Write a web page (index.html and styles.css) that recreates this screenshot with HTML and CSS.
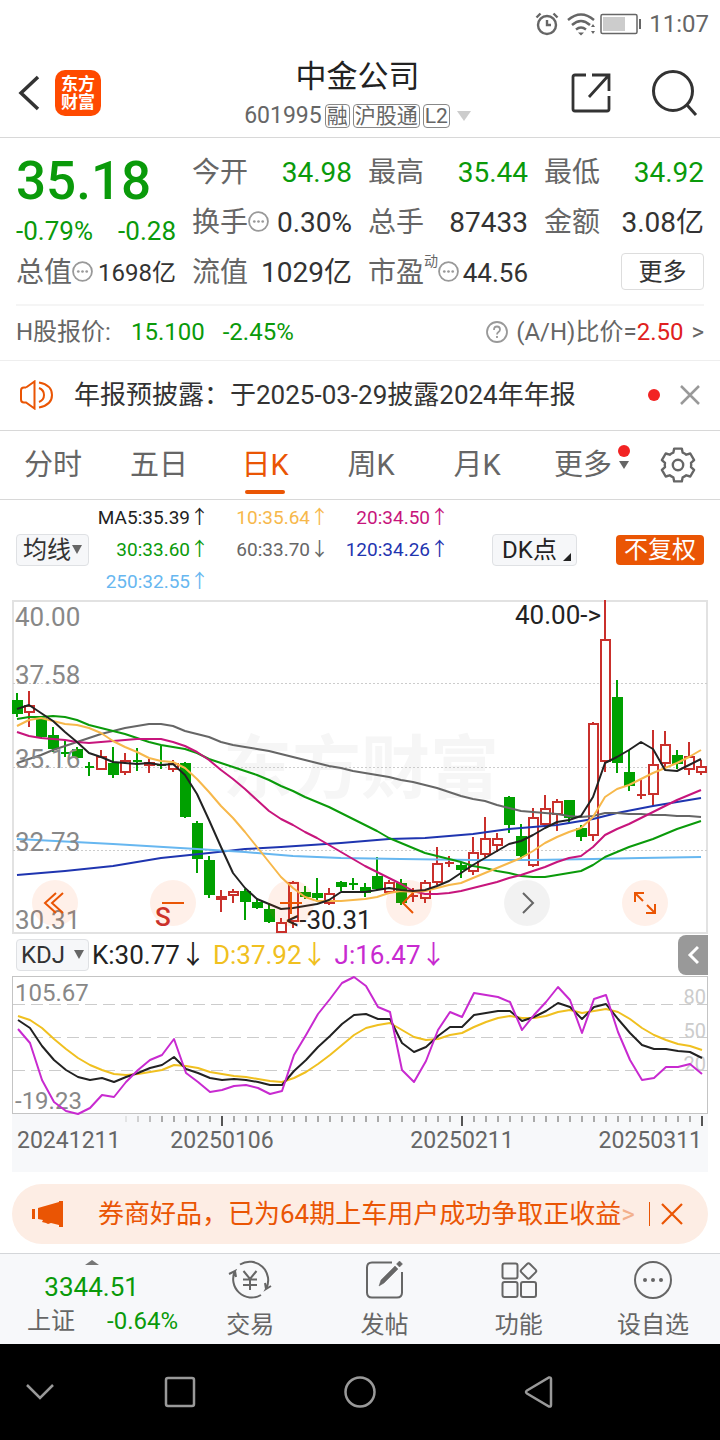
FILE: index.html
```html
<!DOCTYPE html>
<html lang="zh-CN">

<head>
    <meta charset="UTF-8">
    <meta name="viewport" content="width=device-width, initial-scale=1.0">
    <title>中金公司 601995</title>
    <link rel="stylesheet" href="styles.css">
</head>

<body>

    <!-- shared icons -->
    <svg class="defs" width="0" height="0" aria-hidden="true">
        <symbol id="dots" viewBox="0 0 20 20">
            <circle cx="10" cy="10" r="9" fill="none" stroke="#999" stroke-width="1.7" />
            <g fill="#999"><circle cx="6" cy="10" r="1.3" /><circle cx="10" cy="10" r="1.3" /><circle cx="14" cy="10" r="1.3" /></g>
        </symbol>
    </svg>

    <div class="status-bar">
        <svg class="status-alarm" width="24" height="24" viewBox="0 0 24 24" fill="none" stroke="#666" stroke-width="2.400">
            <circle cx="12" cy="13" r="9" />
            <path d="M12 8v5h4M1.500 5.500l4-4M22.500 5.500l-4-4" />
        </svg>
        <svg width="32" height="24" viewBox="0 0 32 24" fill="none" stroke="#666" stroke-width="2.400">
            <path d="M1 8Q14 -3 27 8M5 13Q14 5 23 13M9 17.500Q14 13.500 19 17.500" />
            <path d="M11 20.500h6l-3 3zM24 15l2-3 2 3zM24 19l2 3 2-3z" fill="#666" stroke="none" />
        </svg>
        <svg width="42" height="22" viewBox="0 0 42 22">
            <rect x="2" y="1.500" width="36" height="19" rx="1.500" fill="none" stroke="#666" stroke-width="1.500" />
            <rect x="4" y="4" width="22" height="14" fill="#ccc" />
            <path d="M41 6v10" stroke="#666" stroke-width="2" />
        </svg>
        <span>11:07</span>
    </div>

    <header class="header">
        <div class="header-side">
            <button class="icon-btn" aria-label="返回">
                <svg width="24" height="40" viewBox="0 0 24 40" fill="none" stroke="#333" stroke-width="3.500"><path d="M22 4L5 20l17 16" /></svg>
            </button>
            <a class="logo" href="#">东方<br>财富</a>
        </div>
        <div class="header-title">
            <h1>中金公司</h1>
            <div class="code">
                <span>601995</span>
                <span class="tag">融</span>
                <span class="tag">沪股通</span>
                <span class="tag">L2</span>
                <svg class="code-arrow" width="14" height="10" viewBox="0 0 14 10"><path d="M0 0h14L7 10z" fill="#ccc" /></svg>
            </div>
        </div>
        <div class="header-side header-right">
            <button class="icon-btn" aria-label="分享">
                <svg width="40" height="42" viewBox="0 0 40 42" fill="none" stroke="#333" stroke-width="2.800"><path d="M15 3H4q-2 0-2 2v32q0 2 2 2h32q2 0 2-2V24M21 3h17v16M37 4L18 25" /></svg>
            </button>
            <button class="icon-btn" aria-label="搜索">
                <svg width="48" height="48" viewBox="0 0 48 48" fill="none" stroke="#333" stroke-width="3"><circle cx="22" cy="22" r="19.500" /><path d="M36 36l9 10" /></svg>
            </button>
        </div>
    </header>

    <section class="quote">
        <div class="price-box">
            <div class="price">35.18</div>
            <div class="change"><span>-0.79%</span><span>-0.28</span></div>
        </div>
        <div class="stat"><span class="label">今开</span><span class="green">34.98</span></div>
        <div class="stat"><span class="label">最高</span><span class="green">35.44</span></div>
        <div class="stat"><span class="label">最低</span><span class="green">34.92</span></div>
        <div class="stat"><span class="label">换手<svg width="21" height="21"><use href="#dots" /></svg></span><span>0.30%</span></div>
        <div class="stat"><span class="label">总手</span><span>87433</span></div>
        <div class="stat"><span class="label">金额</span><span>3.08亿</span></div>
        <div class="stat"><span class="label">总值<svg width="21" height="21"><use href="#dots" /></svg></span><span class="small">1698亿</span></div>
        <div class="stat"><span class="label">流值</span><span>1029亿</span></div>
        <div class="stat"><span class="label">市盈<sup>动</sup><svg width="21" height="21"><use href="#dots" /></svg></span><span class="medium">44.56</span></div>
        <div class="stat stat-more"><button class="more-btn">更多</button></div>
    </section>

    <section class="h-share">
        <span>H股报价:</span>
        <span class="green h-price">15.100</span>
        <span class="green">-2.45%</span>
        <a class="ratio" href="#">
            <svg width="22" height="22" viewBox="0 0 22 22" fill="none" stroke="#999" stroke-width="1.800"><circle cx="11" cy="11" r="10" /><path d="M8 9q0-3.500 3-3.500T14 8.500Q14 10 12.500 11T11 13.500M11 15v2" /></svg>
            <span>(A/H)比价=<b>2.50</b></span>
            <span>&gt;</span>
        </a>
    </section>

    <section class="news">
        <svg width="36" height="30" viewBox="0 0 36 30" fill="none" stroke="#ea5504" stroke-width="2">
            <path d="M7 7.500H5Q2 7.500 2 10.500v9q0 3 3 3h2l8.500 6v-27L7 7.500" />
            <path d="M20 8q5 2 5 7t-5 7M20 2.500q13 2.500 13 12.500T20 27.500" />
        </svg>
        <a href="#">年报预披露：于2025-03-29披露2024年年报</a>
        <i class="red-dot"></i>
        <button class="icon-btn" aria-label="关闭">
            <svg width="20" height="20" viewBox="0 0 20 20" stroke="#999" stroke-width="2.500"><path d="M1 1l18 18M19 1L1 19" /></svg>
        </button>
    </section>

    <nav class="tabs">
        <button class="tab">分时</button>
        <button class="tab">五日</button>
        <button class="tab active">日K</button>
        <button class="tab">周K</button>
        <button class="tab">月K</button>
        <button class="tab">更多<svg class="tab-arrow" width="12" height="36" viewBox="0 0 12 36"><circle cx="6" cy="6" r="6" fill="#f22323" /><path d="M1 16h10l-5 8z" fill="#666" /></svg></button>
        <button class="tab-setting" aria-label="设置">
            <svg width="36" height="36" viewBox="0 0 36 36" fill="none" stroke="#666" stroke-width="2.400" stroke-linejoin="round">
                <path d="M13.300 5.700L14.200 1.600h7.600l.9 4.100q2 .7 3.600 2l4-1.200 3.800 6.600-3.100 2.800q.4 2.100 0 4.200l3.100 2.800-3.800 6.600-4-1.200q-1.600 1.300-3.600 2l-.9 4.100h-7.600l-.9-4.100q-2-.7-3.600-2l-4 1.200-3.800-6.600L5 20.100q-.4-2.100 0-4.200l-3.100-2.800 3.800-6.600 4 1.200q1.600-1.300 3.600-2z" />
                <circle cx="18" cy="18" r="5.200" />
            </svg>
        </button>
    </nav>

    <section class="ma-bar">
        <button class="chip">均线<svg width="10" height="10" viewBox="0 0 10 10"><path d="M0 0h10L5 9z" fill="#666" /></svg></button>
        <div class="ma-list">
            <span class="ma5">MA5:35.39↑</span>
            <span class="ma10">10:35.64↑</span>
            <span class="ma20">20:34.50↑</span>
            <span class="ma30">30:33.60↑</span>
            <span class="ma60">60:33.70↓</span>
            <span class="ma120">120:34.26↑</span>
            <span class="ma250">250:32.55↑</span>
        </div>
        <button class="chip chip-dk">DK点<svg width="8" height="8" viewBox="0 0 8 8"><path d="M8 0v8H0z" fill="#222" /></svg></button>
        <button class="chip chip-orange">不复权</button>
    </section>

    <section class="kline">
        <svg class="chart" viewBox="0 0 696 334">
            <text class="watermark" x="211" y="193">东方财富</text>
            <rect class="frame" x="1" y="1" width="694" height="332" />
            <path class="dotted" d="M1 83.500h694M1 167.500h694M1 250.500h694" />
            <g id="candles"></g>
            <g id="maLines"></g>
            <g class="y-label">
                <text x="3" y="26">40.00</text>
                <text x="3" y="84">37.58</text>
                <text x="3" y="168">35.16</text>
                <text x="3" y="251">32.73</text>
                <text x="3" y="329">30.31</text>
            </g>
            <text class="mark" x="503" y="24">40.00-&gt;</text>
            <text class="mark" x="274" y="329">&lt;-30.31</text>
            <text class="sell" x="143" y="326">S</text>
        </svg>
        <div class="chart-tools">
            <button aria-label="最左"><svg width="46" height="46" viewBox="0 0 46 46"><path d="M24 13L13 23l11 10M31 13L20 23l11 10" /></svg></button>
            <button aria-label="缩小"><svg width="46" height="46" viewBox="0 0 46 46"><path d="M12 23h22" /></svg></button>
            <button aria-label="放大"><svg width="46" height="46" viewBox="0 0 46 46"><path d="M12 23h22M23 12v22" /></svg></button>
            <button aria-label="左移"><svg width="46" height="46" viewBox="0 0 46 46"><path d="M27 13L17 23l10 10" /></svg></button>
            <button class="gray" aria-label="右移"><svg width="46" height="46" viewBox="0 0 46 46"><path d="M19 13l10 10-10 10" /></svg></button>
            <button aria-label="全屏"><svg width="46" height="46" viewBox="0 0 46 46"><path d="M13 22v-9h9M13 13l8 8M33 24v9h-9M33 33l-8-8" /></svg></button>
        </div>
    </section>

    <section class="kdj-bar">
        <button class="chip">KDJ<svg width="10" height="10" viewBox="0 0 10 10"><path d="M0 0h10L5 9z" fill="#666" /></svg></button>
        <span class="k">K:30.77↓</span>
        <span class="d">D:37.92↓</span>
        <span class="j">J:16.47↓</span>
        <button class="fold" aria-label="收起">
            <svg width="12" height="20" viewBox="0 0 12 20" fill="none" stroke="#fff" stroke-width="3"><path d="M11 2L3 10l8 8" /></svg>
        </button>
    </section>

    <section class="kdj">
        <svg class="chart" viewBox="0 0 696 138">
            <rect class="frame-thin" x="0.500" y="0.500" width="695" height="137" />
            <path class="dashed" d="M1 28.500h694M1 61.500h694M1 94.500h694" />
            <g class="scale">
                <text x="694" y="28">80</text>
                <text x="694" y="62">50</text>
                <text x="694" y="95">20</text>
            </g>
            <g class="y-label-small">
                <text x="3" y="25">105.67</text>
                <text x="3" y="133">-19.23</text>
            </g>
            <g id="kdjLines"></g>
        </svg>
        <svg class="chart axis" viewBox="0 0 696 58">
            <g id="ticks"></g>
            <text x="5" y="34">20241211</text>
            <text x="210" y="34" text-anchor="middle">20250106</text>
            <text x="450" y="34" text-anchor="middle">20250211</text>
            <text x="690" y="34" text-anchor="end">20250311</text>
        </svg>
    </section>

    <section class="banner">
        <svg width="32" height="28" viewBox="0 0 32 28" fill="#ea5504"><path d="M0 9h3v10H0zM6 8l21-6V1h4v26h-4v-2l-8-2-3 1-2-1-4-1 1-2-5-1z" /></svg>
        <a href="#">券商好品，已为64期上车用户成功争取正收益<span>&gt;</span></a>
        <i class="banner-line"></i>
        <button class="icon-btn" aria-label="关闭">
            <svg width="22" height="22" viewBox="0 0 22 22" stroke="#ea5504" stroke-width="2.200"><path d="M1 1l20 20M21 1L1 21" /></svg>
        </button>
    </section>

    <footer class="bottom">
        <a class="index" href="#">
            <svg width="14" height="5" viewBox="0 0 14 5"><path d="M0 5l7-5 7 5z" fill="#777" /></svg>
            <span class="index-value">3344.51</span>
            <span class="index-row"><span>上证</span><span class="green">-0.64%</span></span>
        </a>
        <a class="action" href="#">
            <svg width="44" height="40" viewBox="0 0 44 40"><path d="M12 4.500A18.500 18.500 0 0 1 38 29l5-3M38 29l-1-6M33 35A18.500 18.500 0 0 1 7 11l-6 3M7 11l1 6M15.500 11l6.500 8 6.500-8M22 19v11M15 19.500h14M15 25h14" /></svg>
            <span>交易</span>
        </a>
        <a class="action" href="#">
            <svg width="44" height="40" viewBox="0 0 44 40"><path d="M29 2.500H9q-5 0-5 5v25q0 5 5 5h25q5 0 5-5V12" /><path d="M16 26l2-6L32 6l3 3-14 14zM33.500 4l3-3 3 3-3 3z" fill="#666" stroke-width="0.500" /></svg>
            <span>发帖</span>
        </a>
        <a class="action" href="#">
            <svg width="44" height="40" viewBox="0 0 44 40"><rect x="5.500" y="3.500" width="15" height="15" rx="2" /><rect x="5.500" y="22" width="15" height="15" rx="2" /><rect x="24" y="22" width="15" height="15" rx="2" /><rect x="25.500" y="5" width="12" height="12" rx="2" transform="rotate(45 31.500 11)" /></svg>
            <span>功能</span>
        </a>
        <a class="action" href="#">
            <svg width="44" height="40" viewBox="0 0 44 40"><circle cx="22" cy="20" r="18" /><g fill="#666" stroke="none"><circle cx="14" cy="20" r="2" /><circle cx="22" cy="20" r="2" /><circle cx="30" cy="20" r="2" /></g></svg>
            <span>设自选</span>
        </a>
    </footer>

    <div class="sys-nav">
        <button aria-label="隐藏"><svg width="32" height="32" viewBox="0 0 32 32"><path d="M3 9l13 13L29 9" /></svg></button>
        <button aria-label="任务"><svg width="32" height="32" viewBox="0 0 32 32"><rect x="2" y="2" width="28" height="28" rx="2" /></svg></button>
        <button aria-label="主页"><svg width="32" height="32" viewBox="0 0 32 32"><circle cx="16" cy="16" r="14.500" /></svg></button>
        <button aria-label="后退"><svg width="32" height="32" viewBox="0 0 32 32"><path d="M3 14.500L25 1.500q2-.5 2 1.500v26q0 2-2 1.500L3 17.500q-2-1.500 0-3z" /></svg></button>
    </div>

    <script src="chart.js"></script>

</body>

</html>
```
FILE: styles.css
```css
* {
    box-sizing: border-box;
}

body {
    margin: 0;
    background: #fff;
    color: #333;
    font-family: Roboto, "Noto Sans CJK SC", sans-serif;
    font-size: 24px;
    line-height: 32px;
}

button {
    margin: 0;
    padding: 0;
    border: none;
    background: none;
    color: inherit;
    font: inherit;
    cursor: pointer;
}

a {
    color: inherit;
    text-decoration: none;
}

svg {
    display: block;
    flex-shrink: 0;
}

.defs {
    position: absolute;
}

.green {
    color: #0a9a0a;
}

.icon-btn {
    display: flex;
}

/* Status bar */
.status-bar {
    display: flex;
    justify-content: flex-end;
    align-items: center;
    height: 48px;
    padding: 0 11px;
    color: #666;
}

.status-alarm {
    margin-right: 8px;
}

.status-bar span {
    margin-left: 8px;
}

/* Header */
.header {
    display: flex;
    justify-content: space-between;
    height: 90px;
    padding: 0 21px 0 16px;
    border-bottom: 1px solid #d8d8d8;
}

.header-side {
    display: flex;
    align-items: center;
    gap: 15px;
    width: 128px;
}

.header-right {
    justify-content: flex-end;
    gap: 40px;
}

.logo {
    width: 46px;
    height: 46px;
    padding: 5px 0;
    border-radius: 10px;
    background: #ff4a00;
    color: #fff;
    font-size: 17px;
    font-weight: 700;
    line-height: 18px;
    text-align: center;
}

.header-title {
    text-align: center;
}

h1 {
    margin: 9px 0 2px;
    color: #222;
    font-size: 31px;
    font-weight: 400;
    line-height: 40px;
}

.code {
    display: flex;
    justify-content: center;
    align-items: center;
    gap: 3px;
    height: 34px;
    color: #666;
    font-size: 23px;
}

.tag {
    height: 24px;
    padding: 0 1px;
    border: 1px solid #888;
    border-radius: 4px;
    font-size: 21px;
    line-height: 22px;
}

.code-arrow {
    margin-left: 4px;
}

/* Quote */
.quote {
    display: grid;
    grid-template-columns: repeat(4, 1fr);
    grid-auto-rows: 50px;
    column-gap: 16px;
    margin: 0 16px;
    padding: 10px 0 6px;
    border-bottom: 2px solid #f5f5f5;
}

.price-box {
    grid-row: span 2;
    color: #0a9a0a;
}

.price {
    height: 69px;
    font-size: 53px;
    font-weight: 500;
    line-height: 67px;
}

.change {
    display: flex;
    justify-content: space-between;
    font-size: 26px;
    line-height: 28px;
}

.stat {
    display: flex;
    justify-content: space-between;
    align-items: center;
    font-size: 28px;
    line-height: 40px;
    white-space: nowrap;
}

.label {
    display: flex;
    align-items: center;
    color: #666;
}

.label svg {
    margin-bottom: 4px;
}

.label sup {
    align-self: flex-start;
    font-size: 14px;
    line-height: 16px;
}

.medium {
    font-size: 26px;
}

.small {
    font-size: 24px;
}

.stat-more {
    justify-content: flex-end;
}

.more-btn {
    width: 83px;
    height: 37px;
    margin-bottom: 3px;
    border: 1px solid #ddd;
    border-radius: 4px;
    font-size: 24px;
    line-height: 32px;
}

/* H share */
.h-share {
    display: flex;
    align-items: center;
    height: 54px;
    padding: 0 16px 2px;
    color: #666;
    line-height: 30px;
}

.h-price {
    margin: 0 18px 0 20px;
}

.ratio {
    display: flex;
    align-items: center;
    gap: 8px;
    margin-left: auto;
}

.ratio b {
    color: #e02020;
    font-weight: 400;
}

/* News */
.news {
    display: flex;
    align-items: center;
    height: 71px;
    padding: 0 20px 2px 19px;
    border-top: 1px solid #eee;
    border-bottom: 1px solid #d8d8d8;
    font-size: 26px;
}

.news a {
    flex: 1;
    margin-left: 19px;
    white-space: nowrap;
}

.red-dot {
    width: 12px;
    height: 12px;
    margin-right: 20px;
    border-radius: 50%;
    background: #f22323;
}

/* Tabs */
.tabs {
    display: flex;
    height: 69px;
    border-bottom: 1px solid #d8d8d8;
    color: #666;
    font-size: 29px;
}

.tab {
    position: relative;
    flex: 106;
    line-height: 68px;
}

.active {
    color: #ea5504;
}

.active::after {
    content: "";
    position: absolute;
    left: 50%;
    bottom: 5px;
    width: 40px;
    height: 4px;
    margin-left: -20px;
    border-radius: 2px;
    background: #ea5504;
}

.tab-arrow {
    position: absolute;
    right: 6px;
    top: 14px;
}

.tab-setting {
    display: flex;
    flex: 84;
    justify-content: center;
    align-items: center;
}

/* MA */
.ma-bar {
    display: flex;
    align-items: center;
    height: 100px;
    padding: 0 16px;
}

.chip {
    display: flex;
    justify-content: center;
    align-items: center;
    gap: 1px;
    width: 73px;
    height: 32px;
    border: 1px solid #dfe1e4;
    border-radius: 4px;
    background: #f6f7f9;
    line-height: 30px;
    white-space: nowrap;
}

.ma-list {
    display: grid;
    grid-template-columns: repeat(3, 120px);
    font-size: 19px;
    text-align: right;
}

.ma5 { color: #222; }
.ma10 { color: #f7b84b; }
.ma20 { color: #c7157c; }
.ma30 { color: #0a9a0a; }
.ma60 { color: #666; }
.ma120 { color: #1f35b0; }
.ma250 { color: #67b7f0; }

.chip-dk {
    gap: 6px;
    width: 85px;
    margin-left: 43px;
    padding-left: 4px;
    color: #222;
}

.chip-dk svg {
    align-self: flex-end;
    margin-bottom: 4px;
}

.chip-orange {
    width: 88px;
    height: 30px;
    margin-left: auto;
    border: none;
    background: #ea5504;
    color: #fff;
    line-height: 28px;
}

/* Charts */
.kline,
.kdj {
    position: relative;
    margin: 0 12px;
}

.chart {
    width: 100%;
    height: auto;
    overflow: visible;
    font-size: 24px;
}

.frame,
.frame-thin {
    fill: none;
    stroke: #e2e2e2;
    stroke-width: 2;
}

.frame-thin {
    stroke: #c4c4c4;
    stroke-width: 1;
}

.dotted {
    stroke: #ccc;
    stroke-dasharray: 2 2;
}

.dashed {
    stroke: #ccc;
    stroke-dasharray: 12 6;
}

.watermark {
    fill: #f6f6f6;
    font-size: 69px;
    font-weight: 700;
}

.y-label {
    fill: #888;
    font-size: 26px;
}

.y-label-small {
    fill: #888;
}

.scale {
    fill: #ccc;
    font-size: 20px;
    text-anchor: end;
}

.mark {
    fill: #222;
    font-size: 26px;
}

.sell {
    fill: #c9302c;
    font-size: 26px;
    font-weight: 500;
}

.up {
    fill: #fff;
    stroke: #c9302c;
    stroke-width: 2;
}

.down {
    fill: #00a000;
    stroke: #00a000;
    stroke-width: 2;
}

.line {
    fill: none;
    stroke: currentColor;
    stroke-width: 2;
    stroke-linejoin: round;
}

.chart-tools {
    position: absolute;
    right: 40px;
    bottom: 8px;
    left: 20px;
    display: flex;
    justify-content: space-between;
}

.chart-tools button {
    border-radius: 50%;
    background: rgba(255, 90, 10, 0.09);
}

.chart-tools path {
    fill: none;
    stroke: #ea5504;
    stroke-width: 2;
}

.chart-tools .gray {
    background: rgba(0, 0, 0, 0.05);
}

.chart-tools .gray path {
    stroke: #666;
}

/* KDJ */
.kdj-bar {
    display: flex;
    align-items: center;
    height: 42px;
    padding: 0 12px 0 16px;
    font-size: 26px;
}

.kdj-bar .chip {
    gap: 9px;
    margin-right: 3px;
    font-size: 24px;
}

.k {
    color: #222;
}

.d {
    margin: 0 7px;
    color: #f0c020;
}

.j {
    color: #c82ad0;
}

.fold {
    display: flex;
    justify-content: center;
    align-items: center;
    width: 30px;
    height: 40px;
    margin-left: auto;
    border-radius: 8px 0 0 8px;
    background: #999;
}

.axis {
    background: #f7f8fa;
    fill: #666;
    font-size: 23px;
}

.tick {
    stroke: #aaa;
    stroke-width: 2;
}

.tick-major {
    stroke: #555;
    stroke-width: 2;
}

/* Banner */
.banner {
    display: flex;
    align-items: center;
    height: 60px;
    margin: 12px 12px 9px;
    padding: 0 25px 0 20px;
    border-radius: 30px;
    background: #fdede4;
    color: #ea5504;
    font-size: 26px;
}

.banner a {
    flex: 1;
    margin-left: 34px;
    white-space: nowrap;
}

.banner a span {
    color: #f3b08c;
}

.banner-line {
    width: 1px;
    height: 24px;
    margin-right: 11px;
    background: #ea5504;
}

/* Bottom */
.bottom {
    display: flex;
    height: 91px;
    border-top: 1px solid #d4d6d9;
    background: #f7f8fa;
    color: #666;
}

.index {
    display: flex;
    flex: 183;
    flex-direction: column;
    align-items: center;
    padding-top: 6px;
}

.index-value {
    margin: 6px 0 2px;
    color: #0a9a0a;
    font-size: 26px;
}

.index-row {
    display: flex;
    align-items: center;
    gap: 32px;
    margin-left: 22px;
}

.action {
    display: flex;
    flex: 134;
    flex-direction: column;
    align-items: center;
    gap: 9px;
    padding-top: 6px;
}

.action svg {
    fill: none;
    stroke: #666;
    stroke-width: 2;
}

/* System navigation */
.sys-nav {
    display: grid;
    grid-template-columns: 4fr 10fr 8fr 10fr 4fr;
    height: 96px;
    background: #000;
}

.sys-nav button {
    display: flex;
    justify-content: center;
    align-items: center;
}

.sys-nav svg {
    fill: none;
    stroke: #999;
    stroke-width: 2.5;
}
```
FILE: chart.js
```js
const SVG_NS = 'http://www.w3.org/2000/svg';
const STEP = 12;

// type, high, body top, body bottom, low
const candles = [
    ['d', 93, 100, 114, 117], ['u', 91, 105, 113, 127], ['d', 116, 118, 137, 138], ['d', 127, 135, 149, 152],
    ['d', 141, 152, 154, 157], ['d', 147, 149, 158, 159], ['d', 162, 166, 167, 176], ['u', 150, 156, 170, 170],
    ['d', 147, 163, 175, 178], ['u', 153, 160, 173, 175], ['d', 148, 160, 161, 171], ['u', 159, 162, 166, 173],
    ['d', 146, 164, 166, 169], ['u', 160, 163, 170, 172], ['d', 162, 163, 217, 218], ['d', 221, 223, 259, 273],
    ['d', 256, 260, 295, 298], ['u', 290, 296, 300, 312], ['u', 289, 291, 296, 303], ['d', 289, 291, 302, 320],
    ['d', 298, 302, 308, 309], ['d', 303, 309, 322, 323], ['u', 318, 322, 333, 333], ['u', 281, 282, 322, 328],
    ['d', 286, 292, 297, 299], ['d', 278, 293, 298, 302], ['u', 288, 293, 304, 305], ['d', 281, 282, 287, 291],
    ['d', 278, 283, 284, 290], ['d', 283, 287, 293, 297], ['d', 257, 276, 289, 290], ['u', 280, 282, 293, 294],
    ['d', 279, 283, 303, 305], ['u', 288, 295, 296, 302], ['u', 280, 282, 299, 303], ['u', 247, 263, 283, 285],
    ['u', 256, 262, 264, 267], ['d', 262, 265, 270, 278], ['u', 237, 252, 272, 275], ['u', 217, 238, 255, 257],
    ['u', 233, 238, 246, 252], ['d', 196, 197, 225, 233], ['d', 224, 236, 256, 259], ['u', 208, 217, 266, 267],
    ['u', 195, 208, 225, 226], ['u', 199, 201, 215, 231], ['d', 200, 200, 218, 222], ['d', 225, 228, 237, 241],
    ['u', 122, 123, 236, 241], ['u', 0, 39, 162, 172], ['d', 80, 97, 163, 173], ['d', 150, 172, 186, 191],
    ['u', 180, 194, 196, 199], ['u', 130, 164, 195, 206], ['u', 131, 144, 164, 170], ['d', 150, 155, 164, 169],
    ['u', 142, 156, 170, 175], ['u', 160, 166, 173, 175]
];

const ma = {
    ma60: [163, 159, 155, 150, 146, 142, 138, 134, 131, 128, 126, 124, 124, 126, 131, 134, 137, 142, 145, 147, 149, 151, 154, 157, 160, 163, 166, 168, 171, 173, 175, 177, 180, 182, 185, 188, 192, 196, 199, 201, 205, 208, 211, 212, 213, 214, 216, 217, 216, 213, 213, 214, 214, 215, 215, 216, 216, 217],
    ma30: [119, 117, 117, 116, 117, 120, 125, 128, 131, 134, 138, 142, 145, 147, 149, 153, 159, 163, 167, 171, 175, 180, 186, 191, 197, 202, 207, 213, 219, 225, 231, 238, 243, 248, 253, 256, 259, 262, 266, 268, 271, 273, 276, 277, 277, 275, 273, 271, 265, 257, 252, 247, 243, 239, 234, 229, 225, 221],
    ma20: [132, 136, 138, 139, 140, 142, 143, 142, 141, 140, 139, 139, 139, 142, 146, 152, 160, 170, 179, 189, 200, 211, 219, 225, 232, 238, 245, 252, 259, 266, 272, 278, 284, 291, 294, 294, 293, 291, 288, 285, 282, 278, 275, 271, 267, 262, 258, 256, 247, 235, 229, 224, 218, 212, 206, 200, 195, 190],
    ma10: [126, 120, 118, 121, 124, 125, 128, 133, 141, 147, 152, 158, 161, 162, 168, 179, 192, 206, 218, 232, 247, 262, 277, 288, 297, 301, 301, 301, 300, 299, 297, 293, 291, 292, 291, 288, 285, 283, 278, 273, 268, 263, 258, 251, 243, 237, 232, 228, 217, 197, 189, 185, 179, 173, 168, 163, 157, 150],
    ma5: [109, 105, 113, 121, 132, 142, 153, 157, 162, 163, 164, 163, 165, 164, 175, 194, 220, 247, 273, 288, 299, 304, 309, 308, 306, 304, 300, 292, 292, 292, 290, 288, 290, 291, 290, 286, 281, 273, 265, 258, 251, 244, 241, 235, 228, 222, 220, 216, 197, 163, 157, 150, 142, 149, 170, 171, 165, 159]
};

// slow averages only need a few points: [index, y]
const slowMa = {
    ma120: [[0, 275], [4, 271], [8, 266], [12, 258], [16, 253], [19, 249], [22, 247], [27, 243], [31, 239], [34, 238], [38, 234], [41, 229], [45, 225], [48, 219], [50, 213], [53, 206], [55, 202], [57, 198]],
    ma250: [[0, 239], [8, 244], [15, 249], [19, 252], [23, 256], [27, 258], [32, 259], [38, 260], [43, 260], [48, 259], [52, 258], [57, 257]]
};

const kdj = {
    d: [40, 44, 52, 63, 73, 82, 89, 94, 98, 99, 98, 96, 94, 89, 90, 92, 96, 98, 100, 101, 103, 105, 106, 102, 96, 88, 79, 69, 59, 52, 49, 47, 54, 61, 64, 63, 59, 57, 51, 46, 42, 40, 42, 42, 40, 36, 34, 37, 35, 33, 36, 43, 52, 59, 64, 68, 70, 74],
    k: [44, 52, 70, 84, 94, 101, 104, 102, 106, 101, 97, 92, 89, 81, 93, 97, 102, 104, 103, 104, 106, 109, 109, 95, 84, 71, 60, 48, 39, 38, 43, 43, 67, 76, 71, 60, 51, 51, 39, 37, 35, 35, 45, 41, 35, 27, 31, 43, 31, 28, 43, 57, 69, 73, 73, 75, 76, 82],
    j: [53, 67, 104, 126, 135, 138, 132, 119, 121, 106, 94, 84, 79, 63, 97, 106, 116, 114, 110, 109, 112, 118, 115, 79, 59, 38, 23, 7, 1, 10, 31, 36, 94, 106, 85, 54, 36, 41, 17, 19, 21, 26, 54, 39, 26, 11, 24, 57, 23, 19, 56, 84, 104, 102, 91, 91, 88, 98]
};

function addPath(parentId, className, d) {
    const path = document.createElementNS(SVG_NS, 'path');
    path.setAttribute('class', className);
    path.setAttribute('d', d);
    document.getElementById(parentId).appendChild(path);
    return path;
}

function addLine(parentId, name, points) {
    addPath(parentId, 'line ' + name, 'M' + points.map(p => p.join(' ')).join('L'));
}

// Candles
candles.forEach(([type, high, top, bottom, low], i) => {
    const x = 5 + i * STEP;
    const wick = `M${x} ${high}V${top}M${x} ${bottom}V${low}`;
    const body = `M${x - 4} ${top + 1}h9V${Math.max(bottom - 1, top + 1)}h-9z`;
    addPath('candles', type === 'u' ? 'up' : 'down', wick + body);
});

// Moving averages
for (const name in slowMa) {
    addLine('maLines', name, slowMa[name].map(([i, y]) => [5 + i * STEP, y]));
}
for (const name in ma) {
    addLine('maLines', name, ma[name].map((y, i) => [5 + i * STEP, y]));
}

// KDJ
for (const name in kdj) {
    addLine('kdjLines', name, kdj[name].map((y, i) => [6 + i * STEP, y]));
}

// Date ticks, the first ones fade in
for (let i = 9; i < 58; i++) {
    const major = i === 17 || i === 37 || i === 57;
    const tick = addPath('ticks', major ? 'tick-major' : 'tick', `M${6 + i * STEP} 2v${major ? 10 : 6}`);
    if (i < 12) {
        tick.setAttribute('opacity', (i - 8) * 0.25);
    }
}
```
